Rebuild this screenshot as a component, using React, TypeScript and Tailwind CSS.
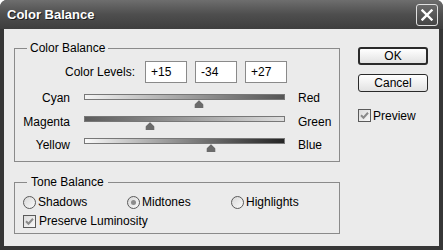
import React from "react";

const sliders = [
  { left: "Cyan", right: "Red", value: 15, grad: "bg-linear-to-r from-[#f4f4f4] to-[#555555]", labelMt: "mt-0", trackMt: "mt-[3px]" },
  { left: "Magenta", right: "Green", value: -34, grad: "bg-linear-to-r from-[#5c5c5c] to-[#dedede]", labelMt: "mt-[1px]", trackMt: "mt-[2px]" },
  { left: "Yellow", right: "Blue", value: 27, grad: "bg-linear-to-r from-[#fafafa] to-[#252525]", labelMt: "mt-[1px]", trackMt: "mt-[1px]" },
];

function Thumb() {
  return (
    <svg width="10" height="8" viewBox="0 0 10 8">
      <path d="M5 0.3 C6 1.3 8 3 9.3 4.6 L9.3 8 L0.7 8 L0.7 4.6 C2 3 4 1.3 5 0.3 Z" fill="#6b6b6b" />
    </svg>
  );
}

function Checkbox() {
  return (
    <div className="w-[13px] h-[13px] border border-[#5a5a5a] bg-linear-to-br from-[#dcdcdc] to-[#f8f8f8] flex items-center justify-center shrink-0">
      <svg width="9" height="9" viewBox="0 0 9 9">
        <path d="M1 4.2 L3.5 6.7 L8 1.8" fill="none" stroke="#8a8a8a" strokeWidth="2" />
      </svg>
    </div>
  );
}

function Radio({ checked }: { checked?: boolean }) {
  return (
    <div className="w-[13px] h-[13px] rounded-full border border-[#5a5a5a] bg-linear-to-br from-[#d8d8d8] to-[#fafafa] flex items-center justify-center shrink-0">
      {checked && <div className="w-[5px] h-[5px] rounded-full bg-[#8c8c8c]" />}
    </div>
  );
}

export default function App() {
  return (
    <div className="w-[443px] h-[250px] flex flex-col bg-[#363636] rounded-t-[7px] overflow-hidden font-['Liberation_Sans',Arial,sans-serif] text-[12px] text-black">
      <div className="h-[29px] shrink-0 flex items-center justify-between pl-[7px] pr-[5px] bg-linear-to-b from-[#6e6e6e] via-[#4e4e4e] to-[#3e3e3e]">
        <span className="text-white font-bold text-[13px] leading-none [text-shadow:1px_1px_0_#1e1e1e]">Color Balance</span>
        <div className="w-[22px] h-[22px] rounded-[3px] border border-[#e0e0e0] bg-linear-to-b from-[#6a6a6a] to-[#454545] flex items-center justify-center">
          <svg width="12" height="12" viewBox="0 0 12 12">
            <path d="M1.5 1.5 L10.5 10.5 M10.5 1.5 L1.5 10.5" stroke="#ffffff" strokeWidth="2.4" strokeLinecap="square" />
          </svg>
        </div>
      </div>
      <div className="flex-1 mx-[4px] mb-[4px] bg-[#ebebeb] flex">
        <div className="pl-[10px] pt-[12px] flex flex-col">
          <fieldset className="w-[326px] border border-[#8a8a8a] px-0 pt-[6px] pb-[1px] m-0">
            <legend className="ml-[12px] px-[3px] leading-[14px]">Color Balance</legend>
            <div className="flex items-center h-[22px]">
              <div className="w-[120px] text-right leading-[14px]">Color Levels:</div>
              <div className="ml-[10px] flex gap-[8px]">
                {["+15", "-34", "+27"].map((v) => (
                  <div key={v} className="w-[42px] h-[22px] border border-[#8a8a8a] bg-white pl-[5px] flex items-center leading-[14px]">
                    {v}
                  </div>
                ))}
              </div>
            </div>
            <div className="mt-[8px] flex flex-col">
              {sliders.map((s) => (
                <div key={s.left} className="h-[23px] flex items-start">
                  <div className={`w-[55px] text-right leading-[14px] ${s.labelMt}`}>{s.left}</div>
                  <div className={`ml-[14px] w-[201px] ${s.trackMt} relative`}>
                    <div className={`h-[6px] border border-[#777777] ${s.grad}`} />
                    <div className="absolute top-[6px]" style={{ left: `${100 + s.value - 5}px` }}>
                      <Thumb />
                    </div>
                  </div>
                  <div className={`ml-[13px] leading-[14px] ${s.labelMt}`}>{s.right}</div>
                </div>
              ))}
            </div>
          </fieldset>
          <fieldset className="mt-[13px] w-[326px] border border-[#8a8a8a] px-0 pt-[6px] pb-[5px] m-0">
            <legend className="ml-[12px] px-[4px] leading-[14px]">Tone Balance</legend>
            <div className="flex h-[14px] items-center pl-[8px]">
              <div className="w-[104px] flex items-center">
                <Radio />
                <span className="ml-[2px] leading-[14px]">Shadows</span>
              </div>
              <div className="w-[104px] flex items-center">
                <Radio checked />
                <span className="ml-[2px] leading-[14px]">Midtones</span>
              </div>
              <div className="flex items-center">
                <Radio />
                <span className="ml-[2px] leading-[14px]">Highlights</span>
              </div>
            </div>
            <div className="mt-[5px] flex h-[14px] items-center pl-[8px]">
              <Checkbox />
              <span className="ml-[3px] leading-[14px]">Preserve Luminosity</span>
            </div>
          </fieldset>
        </div>
        <div className="ml-[18px] pt-[18px] flex flex-col">
          <div className="w-[70px] h-[18px] rounded-[3px] border-[2px] border-[#2a2a2a] bg-linear-to-b from-[#ffffff] to-[#e2e2e2] flex items-center justify-center leading-none">
            OK
          </div>
          <div className="mt-[9px] w-[70px] h-[18px] rounded-[3px] border border-[#2a2a2a] bg-linear-to-b from-[#ffffff] to-[#e2e2e2] flex items-center justify-center leading-none">
            Cancel
          </div>
          <div className="mt-[17px] flex items-center h-[13px]">
            <Checkbox />
            <span className="ml-[2px] leading-[14px]">Preview</span>
          </div>
        </div>
      </div>
    </div>
  );
}
